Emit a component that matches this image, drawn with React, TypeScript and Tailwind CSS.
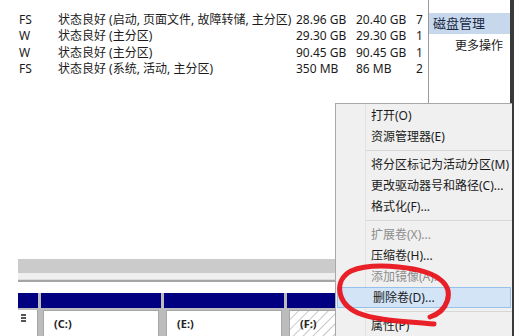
const rows = [
  { fs: "FS", status: "状态良好 (启动, 页面文件, 故障转储, 主分区)", cap: "28.96 GB", free: "20.40 GB", pct: "7" },
  { fs: "W", status: "状态良好 (主分区)", cap: "29.30 GB", free: "29.30 GB", pct: "1" },
  { fs: "W", status: "状态良好 (主分区)", cap: "90.45 GB", free: "90.45 GB", pct: "1" },
  { fs: "FS", status: "状态良好 (系统, 活动, 主分区)", cap: "350 MB", free: "86 MB", pct: "2" },
];

type Item = { label?: string; sep?: boolean; disabled?: boolean; active?: boolean };

const menu: Item[] = [
  { label: "打开(O)" },
  { label: "资源管理器(E)" },
  { sep: true },
  { label: "将分区标记为活动分区(M)" },
  { label: "更改驱动器号和路径(C)..." },
  { label: "格式化(F)..." },
  { sep: true },
  { label: "扩展卷(X)...", disabled: true },
  { label: "压缩卷(H)..." },
  { label: "添加镜像(A)...", disabled: true },
  { label: "删除卷(D)...", active: true },
  { sep: true },
  { label: "属性(P)" },
];

function ContextMenu() {
  return (
    <div className="absolute left-[335px] top-[103px] w-[177px] h-[240px] bg-[#f0f0f0] border-l border-t border-[#a8a8a8] pt-[1px]">
      {/* icon gutter */}
      <div className="absolute left-[29px] top-0 bottom-0 w-px bg-[#e2e2e2]" />
      {menu.map((it, i) =>
        it.sep ? (
          <div key={i} className="h-[7px] flex items-center pl-[30px]">
            <div className="h-px w-full bg-[#d7d7d7]" />
          </div>
        ) : (
          <div
            key={i}
            className={
              "relative h-[21px] flex items-center pl-[35px] text-[12px] " +
              (it.disabled ? "text-[#8d8d8d] " : "text-[#1b1b1b] ") +
              (it.active ? "mx-[1px] pl-[34px] bg-[#d2e4f6] border border-[#96c1ea]" : "")
            }
          >
            {it.label}
          </div>
        )
      )}
    </div>
  );
}

function RedCircle() {
  return (
    <svg className="absolute left-0 top-0 pointer-events-none" width="526" height="336" viewBox="0 0 526 336">
      <path
        d="M 430 317 C 448 311, 454 292, 442 281 C 426 266, 372 262, 351 271 C 334 280, 336 303, 358 313 C 378 321, 405 321, 434 324"
        fill="none"
        stroke="#e8141c"
        strokeWidth="5"
        strokeLinecap="round"
        opacity="0.95"
      />
    </svg>
  );
}

function DiskColumn({ label, w, hatched }: { label?: string; w: string; hatched?: boolean }) {
  return (
    <div className={"flex flex-col " + w}>
      <div className="h-[15px] bg-[#000080]" />
      <div className="flex-1 mt-[2px] px-[2px]">
        <div
          className={"h-full border border-[#a6a6a6] border-b-0 pl-[10px] pt-[5px] text-[11px] font-bold text-[#222] " + (hatched ? "bg-[repeating-linear-gradient(135deg,#ffffff_0px,#ffffff_5px,#c8c8c8_6px,#ffffff_7px)]" : "bg-white")}
        >
          {label}
        </div>
      </div>
    </div>
  );
}

export default function App() {
  return (
    <div className="relative w-[526px] h-[336px] overflow-hidden bg-white font-['Noto_Sans','Noto_Sans_CJK_SC',sans-serif] text-[#1b1b1b]">
      <div className="flex h-full">
        {/* volume list + graphical view */}
        <div className="w-[428px] flex flex-col">
          <div className="pt-[12px] flex flex-col">
            {rows.map((r, i) => (
              <div key={i} className="h-[16.3px] grid grid-cols-[39px_238px_60px_60px_1fr] pl-[19px] text-[12px] leading-[16px] whitespace-nowrap">
                <span>{r.fs}</span>
                <span>{r.status}</span>
                <span>{r.cap}</span>
                <span>{r.free}</span>
                <span>{r.pct}</span>
              </div>
            ))}
          </div>
          <div className="flex-1" />
          <div className="ml-[18px] flex flex-col">
            <div className="h-[14px] bg-[#cbcbcb]" />
            <div className="h-[7px] bg-[#efefef] border-b border-[#dcdcdc]" />
            <div className="h-[2px] bg-[#a5a5a5]" />
            <div className="h-[11px] bg-white" />
            <div className="h-[43px] flex gap-[3px] bg-[#bcbcbc]">
              <div className="w-[20px] flex flex-col">
                <div className="h-[15px] bg-[#000080]" />
                <div className="flex-1 mt-[2px] bg-white border-r border-[#a6a6a6] pl-[3px] pt-[4px]">
                  <div className="w-[5px] h-[10px] flex flex-col gap-px">
                    <div className="h-[2px] bg-[#555]" />
                    <div className="h-[2px] bg-[#555]" />
                    <div className="h-[2px] bg-[#555]" />
                  </div>
                </div>
              </div>
              <DiskColumn label="(C:)" w="w-[120px]" />
              <DiskColumn label="(E:)" w="w-[120px]" />
              <DiskColumn label="(F:)" w="flex-1" hatched />
            </div>
          </div>
        </div>

        {/* actions pane */}
        <div className="w-[82px] border-l border-[#9a9a9a] pt-[13px]">
          <div className="h-[21px] bg-[#c7d8ec] pl-[4px] text-[13px] leading-[21px] text-[#1a2a44]">磁盘管理</div>
          <div className="text-right pr-[7px] text-[12px] mt-[3px]">更多操作</div>
        </div>
        <div className="w-[4px] bg-[#3a3a3a]" />
        <div className="flex-1 bg-white" />
      </div>

      <ContextMenu />
      <RedCircle />
    </div>
  );
}
